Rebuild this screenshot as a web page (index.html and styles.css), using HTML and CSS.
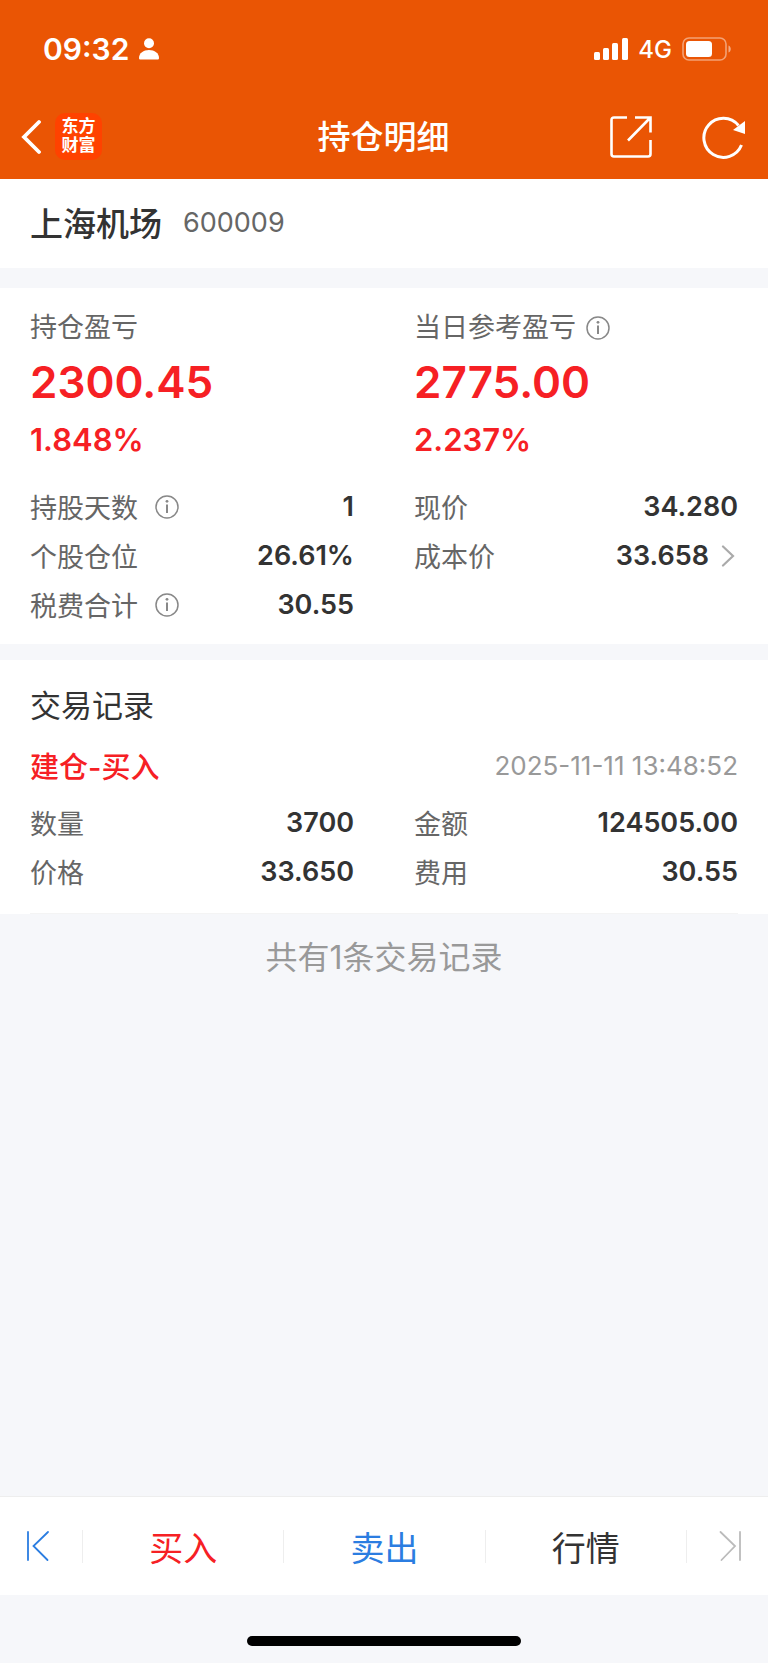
FILE: index.html
```html
<!DOCTYPE html>
<html lang="zh-CN">
<head>
<meta charset="utf-8">
<meta name="viewport" content="width=device-width, initial-scale=1">
<title>持仓明细</title>
<link rel="stylesheet" href="styles.css">
</head>
<body>
<svg class="sprite" aria-hidden="true">
  <symbol id="info" viewBox="0 0 24 24">
    <circle cx="12" cy="12" r="11" fill="none" stroke="currentColor" stroke-width="1.5"/>
    <path d="M12 9.5v8.5" fill="none" stroke="currentColor" stroke-width="2"/>
    <circle cx="12" cy="6.3" r="1.4" fill="currentColor"/>
  </symbol>
</svg>
<div class="page">
  <header class="header">
    <div class="status">
      <div class="status-group">
        <span class="clock">09:32</span>
        <svg class="person" width="20" height="22" viewBox="0 0 20 22" fill="currentColor" aria-hidden="true">
          <circle cx="10" cy="5.2" r="5"/>
          <path d="M0 20c0-5 4.500-8 10-8s10 3 10 8c0 1-.6 1.500-1.600 1.500H1.600C.6 21.500 0 21 0 20z"/>
        </svg>
      </div>
      <div class="status-group status-right">
        <svg width="34" height="24" viewBox="0 0 34 24" fill="currentColor" aria-hidden="true">
          <rect x="0" y="15" width="6" height="8" rx="1.500"/>
          <rect x="9" y="11" width="6" height="12" rx="1.500"/>
          <rect x="18" y="6" width="6" height="17" rx="1.500"/>
          <rect x="28" y="1" width="6" height="22" rx="1.500"/>
        </svg>
        <span class="network">4G</span>
        <svg width="50" height="24" viewBox="0 0 50 24" aria-hidden="true">
          <rect x="1" y="1" width="43" height="22" rx="6" fill="none" stroke="#fff" stroke-opacity=".45" stroke-width="1.600"/>
          <rect x="4" y="4" width="26" height="16" rx="3.500" fill="#fff"/>
          <path d="M46.500 8.500c3 1 3 6 0 7z" fill="#fff" fill-opacity=".5"/>
        </svg>
      </div>
    </div>
    <nav class="nav">
      <div class="nav-left">
        <button class="icon-button" type="button" aria-label="返回">
          <svg width="20" height="36" viewBox="0 0 20 36" fill="none" stroke="currentColor" stroke-width="3.800" stroke-linecap="round"><path d="M18 3 3 18 18 33" /></svg>
        </button>
        <a class="logo" href="#">东方<br>财富</a>
      </div>
      <h1 class="nav-title">持仓明细</h1>
      <div class="nav-right">
        <button class="icon-button" type="button" aria-label="分享">
          <svg width="42" height="42" viewBox="0 0 42 42" fill="none" stroke="currentColor" stroke-width="2.600"><path d="M17 1.500H4Q1.500 1.500 1.500 4V38Q1.500 40.500 4 40.500H38Q40.500 40.500 40.500 38V24M25 1.500H40.500V16.500M40 2 18 24.500"/></svg>
        </button>
        <button class="icon-button" type="button" aria-label="刷新">
          <svg width="44" height="44" viewBox="0 0 44 44" fill="none" stroke="currentColor" stroke-width="3"><path d="M39.500 30A19.500 19.500 0 1 1 36.500 10.500"/><path d="M43 6v13L31 15z" fill="currentColor" stroke="none"/></svg>
        </button>
      </div>
    </nav>
  </header>

  <main class="main">
    <section class="stock">
      <h2 class="stock-name">上海机场</h2>
      <span class="stock-code">600009</span>
    </section>

    <section class="position">
      <div class="columns">
        <div class="profit">
          <div class="label profit-label">持仓盈亏</div>
          <div class="amount">2300.45</div>
          <div class="percent">1.848%</div>
        </div>
        <div class="profit">
          <div class="label profit-label">当日参考盈亏<button class="info" type="button" aria-label="当日参考盈亏说明"><svg width="24" height="24"><use href="#info"/></svg></button></div>
          <div class="amount">2775.00</div>
          <div class="percent">2.237%</div>
        </div>
      </div>
      <div class="columns details">
        <dl class="list">
          <div class="row"><dt class="label">持股天数<button class="info info-wide" type="button" aria-label="持股天数说明"><svg width="24" height="24"><use href="#info"/></svg></button></dt><dd class="value">1</dd></div>
          <div class="row"><dt class="label">个股仓位</dt><dd class="value">26.61%</dd></div>
          <div class="row"><dt class="label">税费合计<button class="info info-wide" type="button" aria-label="税费合计说明"><svg width="24" height="24"><use href="#info"/></svg></button></dt><dd class="value">30.55</dd></div>
        </dl>
        <dl class="list">
          <div class="row"><dt class="label">现价</dt><dd class="value">34.280</dd></div>
          <div class="row"><dt class="label">成本价</dt><dd class="value"><a class="more" href="#">33.658<svg width="17" height="22" viewBox="0 0 17 22" fill="none" stroke="#aaa" stroke-width="2.200" stroke-linecap="round" aria-hidden="true"><path d="M2 1.500 12 11 2 20.500"/></svg></a></dd></div>
        </dl>
      </div>
    </section>

    <section class="trades">
      <h2 class="trades-title">交易记录</h2>
      <div class="trade-head">
        <h3 class="trade-kind">建仓-买入</h3>
        <time class="trade-time" datetime="2025-11-11T13:48:52">2025-11-11 13:48:52</time>
      </div>
      <div class="columns trade-body">
        <dl class="list">
          <div class="row"><dt class="label">数量</dt><dd class="value">3700</dd></div>
          <div class="row"><dt class="label">价格</dt><dd class="value">33.650</dd></div>
        </dl>
        <dl class="list">
          <div class="row"><dt class="label">金额</dt><dd class="value">124505.00</dd></div>
          <div class="row"><dt class="label">费用</dt><dd class="value">30.55</dd></div>
        </dl>
      </div>
    </section>
    <p class="summary">共有1条交易记录</p>
  </main>

  <footer class="footer">
    <div class="actions">
      <button class="action action-edge sell" type="button" aria-label="上一个">
        <svg width="24" height="32" viewBox="0 0 24 32" fill="none" stroke="currentColor" stroke-width="1.800" stroke-linecap="round"><path d="M2 2v28M22 2 7.500 16 21.500 30"/></svg>
      </button>
      <button class="action buy" type="button">买入</button>
      <button class="action sell" type="button">卖出</button>
      <button class="action" type="button">行情</button>
      <button class="action action-edge disabled" type="button" aria-label="下一个">
        <svg width="24" height="32" viewBox="0 0 24 32" fill="none" stroke="currentColor" stroke-width="1.800" stroke-linecap="round"><path d="M22 2v28M2.500 2 17 16 3.500 30"/></svg>
      </button>
    </div>
    <div class="home"><span class="home-bar"></span></div>
  </footer>
</div>
</body>
</html>
```
FILE: styles.css
```css
* {
  box-sizing: border-box;
}

body {
  margin: 0;
  background: #f6f7fa;
  color: #333;
  font-family: Inter, "Noto Sans CJK SC", sans-serif;
  font-size: 27px;
}

h1, h2, h3, p, dl, dd {
  margin: 0;
}

button {
  padding: 0;
  border: 0;
  background: none;
  color: inherit;
  font: inherit;
}

a {
  color: inherit;
  text-decoration: none;
}

svg {
  display: block;
}

.sprite {
  display: none;
}

.page {
  display: flex;
  flex-direction: column;
  min-height: 100vh;
}

.header {
  background: #ea5504;
  color: #fff;
}

.status {
  display: flex;
  align-items: center;
  justify-content: space-between;
  height: 96px;
  padding: 2px 36px 0 43px;
}

.status-group {
  display: flex;
  align-items: center;
  gap: 10px;
}

.clock {
  font-size: 30px;
  font-weight: 600;
}

.network {
  font-size: 24px;
  font-weight: 500;
}

.nav {
  display: grid;
  grid-template-columns: 1fr auto 1fr;
  align-items: center;
  height: 83px;
  padding: 0 22px 2px 21px;
}

.nav-left,
.nav-right {
  display: flex;
  align-items: center;
}

.nav-left {
  gap: 14px;
}

.nav-right {
  justify-content: flex-end;
  gap: 50px;
}

.nav-title {
  font-size: 33px;
  font-weight: 500;
  line-height: 48px;
}

.logo {
  width: 47px;
  height: 47px;
  padding-top: 4px;
  border-radius: 10px;
  background: #ff4200;
  font-size: 17px;
  font-weight: 700;
  line-height: 19px;
  text-align: center;
}

.main {
  flex: 1;
}

.stock {
  display: flex;
  align-items: center;
  gap: 21px;
  height: 89px;
  padding: 0 30px 3px;
  background: #fff;
}

.stock-name {
  font-size: 33px;
  font-weight: 500;
}

.stock-code {
  color: #666;
}

.position {
  margin-top: 20px;
  padding: 22px 30px 15px;
  background: #fff;
}

.columns {
  display: grid;
  grid-template-columns: 1fr 1fr;
  gap: 60px;
}

.label {
  display: flex;
  align-items: center;
  color: #666;
}

.profit {
  color: #f62024;
  font-weight: 600;
}

.profit-label {
  font-weight: 400;
  line-height: 36px;
}

.amount {
  font-size: 44px;
  line-height: 72px;
}

.percent {
  font-size: 31px;
  line-height: 44px;
}

.details {
  margin-top: 20px;
}

.info {
  margin-left: 10px;
  color: #888;
}

.info-wide {
  margin-left: 17px;
}

.row {
  display: flex;
  align-items: center;
  justify-content: space-between;
  height: 49px;
}

.value {
  font-weight: 600;
}

.more {
  display: flex;
  align-items: center;
  gap: 12px;
}

.trades {
  margin-top: 16px;
  padding: 20px 30px 0;
  background: #fff;
}

.trades-title {
  font-size: 31px;
  font-weight: 400;
  line-height: 52px;
}

.trade-head {
  display: flex;
  align-items: center;
  justify-content: space-between;
  height: 66px;
}

.trade-kind {
  color: #f62024;
  font-size: 29px;
  font-weight: 500;
}

.trade-time {
  color: #999;
  font-size: 26px;
}

.trade-body {
  padding-bottom: 17px;
  border-bottom: 1px solid #f4f4f4;
}

.summary {
  color: #999;
  font-size: 32px;
  line-height: 88px;
  text-align: center;
}

.actions {
  display: grid;
  grid-template-columns: 82px 1fr 1fr 1fr 82px;
  align-items: center;
  height: 99px;
  border-top: 1px solid #eee;
  background: #fff;
}

.action {
  display: flex;
  align-items: center;
  justify-content: center;
  height: 33px;
  font-size: 34px;
}

.action + .action {
  border-left: 1px solid #eee;
}

.action-edge:first-child {
  justify-content: flex-start;
  padding-left: 26px;
}

.action-edge:last-child {
  justify-content: flex-end;
  padding-right: 26px;
}

.buy {
  color: #f62024;
}

.sell {
  color: #2b7de1;
}

.disabled {
  color: #bbb;
}

.home {
  display: flex;
  justify-content: center;
  padding: 41px 0 17px;
}

.home-bar {
  width: 274px;
  height: 10px;
  border-radius: 5px;
  background: #000;
}
```
